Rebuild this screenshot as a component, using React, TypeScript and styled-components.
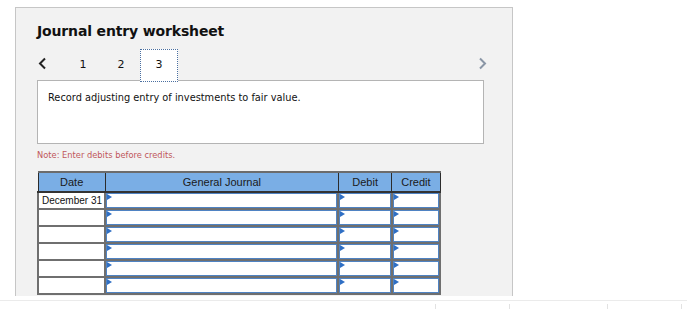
import React from "react";
import styled, { createGlobalStyle } from "styled-components";

const Global = createGlobalStyle`
  html, body { margin: 0; padding: 0; background: #ffffff; }
  body { font-family: "DejaVu Sans", Verdana, sans-serif; }
`;

const Page = styled.div`
  width: 687px;
  height: 309px;
  overflow: hidden;
  display: flex;
  flex-direction: column;
`;

const Panel = styled.div`
  margin: 7px 0 0 15px;
  width: 498px;
  height: 289px;
  background: #f2f2f2;
  border: 1px solid #c6c6c6;
  border-bottom: none;
  padding: 0 28px 0 21px;
  box-sizing: border-box;
  display: flex;
  flex-direction: column;
`;

const Title = styled.h1`
  margin: 14px 0 0 0;
  font-size: 14px;
  letter-spacing: -0.15px;
  line-height: 18px;
  font-weight: bold;
  color: #111;
`;

const TabRow = styled.div`
  margin-top: 9px;
  height: 31px;
  display: flex;
  align-items: stretch;
  position: relative;
  z-index: 1;
`;

const Chevron = styled.div<{ $right?: boolean }>`
  width: 26px;
  display: flex;
  align-items: center;
  justify-content: ${(p) => (p.$right ? "flex-end" : "flex-start")};
  padding-left: ${(p) => (p.$right ? "0" : "1px")};
  margin-left: ${(p) => (p.$right ? "auto" : "0")};
  margin-right: ${(p) => (p.$right ? "-3px" : "0")};
  padding-bottom: 3px;
`;

const Tab = styled.div<{ $active?: boolean }>`
  width: 38px;
  display: flex;
  align-items: center;
  justify-content: center;
  font-family: "DejaVu Sans", Verdana, sans-serif;
  font-size: 11px;
  color: #111;
  padding-bottom: 2px;
  box-sizing: border-box;
  background: ${(p) => (p.$active ? "#ffffff" : "transparent")};
  border: ${(p) => (p.$active ? "1px dotted #4a6fa0" : "1px solid transparent")};
  margin-bottom: -2px;
`;

const Prompt = styled.div`
  height: 64px;
  box-sizing: border-box;
  background: #ffffff;
  border: 1px solid #b4b4b4;
  padding: 10px 10px;
  font-size: 9.8px;
  line-height: 14px;
  color: #111;
`;

const Note = styled.div`
  margin-top: 6px;
  font-size: 8.3px;
  line-height: 11px;
  color: #c0575b;
`;

const Table = styled.table`
  margin-top: 10px;
  align-self: flex-start;
  width: 404px;
  border-collapse: collapse;
  table-layout: fixed;
  font-family: "Liberation Sans", Arial, sans-serif;
  font-size: 10px;
`;

const Th = styled.th<{ $w: number }>`
  width: ${(p) => p.$w}px;
  height: 18px;
  padding: 0;
  background: #7aaee5;
  color: #1a1a1a;
  font-size: 11px;
  font-weight: normal;
  border: 1px solid #2c2c2c;
  border-top: 2px solid #6c6c6c;
  border-bottom: 2px solid #333;
  text-align: center;
`;

const Td = styled.td`
  height: 15px;
  padding: 0;
  background: #ffffff;
  border: 2px solid #6f6f6f;
  vertical-align: top;
`;

const DateCell = styled(Td)`
  padding: 0 0 0 3px;
  vertical-align: middle;
  color: #111;
  white-space: nowrap;
  overflow: hidden;
`;

const Input = styled.div`
  position: relative;
  height: 15px;
  box-sizing: border-box;
  border: 1px solid #4f83c3;
  background: #fff;
`;

const Flag = styled.span`
  position: absolute;
  left: 0;
  top: 0;
  width: 0;
  height: 0;
  border-top: 3px solid transparent;
  border-bottom: 3px solid transparent;
  border-left: 5px solid #2f6fc4;
`;

const Footer = styled.div`
  margin-top: 4px;
  border-top: 1px solid #ebebeb;
  height: 8px;
  display: flex;
`;

const Tick = styled.div<{ $w: number }>`
  width: ${(p) => p.$w}px;
  margin-top: 3px;
  border-right: 1px solid #e2e2e2;
  flex: none;
`;

const ChevronIcon = ({ dir, color }: { dir: "l" | "r"; color: string }) => (
  <svg width="9" height="13" viewBox="0 0 9 13">
    <path
      d={dir === "l" ? "M7 1.5 L2 6.5 L7 11.5" : "M2 1.5 L7 6.5 L2 11.5"}
      fill="none"
      stroke={color}
      strokeWidth="2"
    />
  </svg>
);

const rows = ["December 31", "", "", "", "", ""];

export default function App() {
  return (
    <Page>
      <Global />
      <Panel>
        <Title>Journal entry worksheet</Title>
        <TabRow>
          <Chevron>
            <ChevronIcon dir="l" color="#222" />
          </Chevron>
          <Tab>1</Tab>
          <Tab>2</Tab>
          <Tab $active>3</Tab>
          <Chevron $right>
            <ChevronIcon dir="r" color="#8a96a6" />
          </Chevron>
        </TabRow>
        <Prompt>Record adjusting entry of investments to fair value.</Prompt>
        <Note>Note: Enter debits before credits.</Note>
        <Table>
          <thead>
            <tr>
              <Th $w={66}>Date</Th>
              <Th $w={231}>General Journal</Th>
              <Th $w={52}>Debit</Th>
              <Th $w={47}>Credit</Th>
            </tr>
          </thead>
          <tbody>
            {rows.map((d, i) => (
              <tr key={i}>
                <DateCell>{d}</DateCell>
                {[0, 1, 2].map((c) => (
                  <Td key={c}>
                    <Input>
                      <Flag />
                    </Input>
                  </Td>
                ))}
              </tr>
            ))}
          </tbody>
        </Table>
      </Panel>
      <Footer>
        <Tick $w={435} />
        <Tick $w={73} />
        <Tick $w={97} />
        <Tick $w={73} />
      </Footer>
    </Page>
  );
}
